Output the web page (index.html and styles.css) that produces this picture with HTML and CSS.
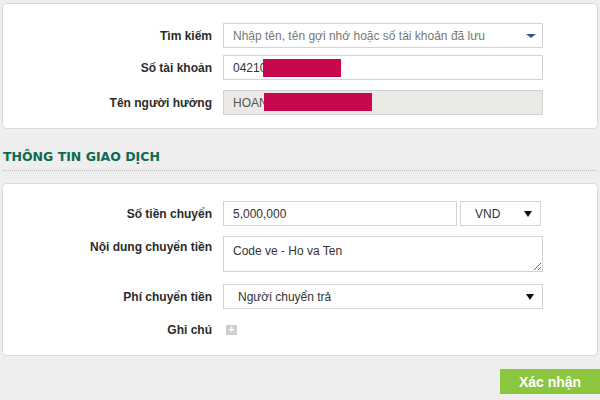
FILE: index.html
```html
<!DOCTYPE html>
<html lang="vi">
<head>
    <meta charset="UTF-8">
    <meta name="viewport" content="width=device-width, initial-scale=1.0">
    <title>Chuyển khoản</title>
    <link rel="stylesheet" href="styles.css">
</head>
<body>

    <div class="transfer-page">
        <!-- Thông tin người hưởng -->
        <div class="panel panel-receiver">
            <div class="form-row">
                <label class="form-label">Tìm kiếm</label>
                <div class="field select-field">
                    <select class="form-control search-select">
                        <option>Nhập tên, tên gợi nhớ hoặc số tài khoản đã lưu</option>
                    </select>
                    <span class="caret caret-blue"></span>
                </div>
            </div>
            <div class="form-row">
                <label class="form-label">Số tài khoản</label>
                <div class="field">
                    <input type="text" class="form-control" value="04210">
                    <span class="mask mask-account"></span>
                </div>
            </div>
            <div class="form-row">
                <label class="form-label">Tên người hưởng</label>
                <div class="field">
                    <input type="text" class="form-control readonly" value="HOAN" readonly>
                    <span class="mask mask-name"></span>
                </div>
            </div>
        </div>

        <h2 class="section-title">THÔNG TIN GIAO DỊCH</h2>

        <!-- Thông tin giao dịch -->
        <div class="panel panel-transaction">
            <div class="form-row">
                <label class="form-label">Số tiền chuyển</label>
                <div class="field amount-field">
                    <input type="text" class="form-control amount" value="5,000,000">
                    <div class="select-field currency">
                        <select class="form-control">
                            <option>VND</option>
                        </select>
                        <span class="caret"></span>
                    </div>
                </div>
            </div>
            <div class="form-row row-top">
                <label class="form-label">Nội dung chuyển tiền</label>
                <div class="field">
                    <textarea class="form-control note">Code ve - Ho va Ten</textarea>
                </div>
            </div>
            <div class="form-row">
                <label class="form-label">Phí chuyển tiền</label>
                <div class="field select-field">
                    <select class="form-control fee-select">
                        <option>Người chuyển trả</option>
                    </select>
                    <span class="caret"></span>
                </div>
            </div>
            <div class="form-row row-note">
                <label class="form-label">Ghi chú</label>
                <div class="field">
                    <span class="add-note">+</span>
                </div>
            </div>
        </div>

        <div class="actions">
            <button type="button" class="btn-confirm">Xác nhận</button>
        </div>
    </div>

</body>
</html>
```

FILE: styles.css
```css
body {
    margin: 0;
    background-color: #eeeeee;
    font-family: "Liberation Sans", Arial, sans-serif;
    font-size: 12px;
    color: #333333;
}

.transfer-page {
    padding-top: 3px;
}

.panel {
    background-color: #ffffff;
    border: 1px solid #dadada;
    border-radius: 5px;
    margin: 0 2px;
}

.panel-receiver {
    padding: 19px 0 13px;
}

.panel-transaction {
    padding: 17px 0 15px;
}

.form-row {
    display: flex;
    align-items: center;
}

/* khoảng cách giữa các dòng */
.panel-receiver .form-row:nth-child(1) { margin-bottom: 7px; }
.panel-receiver .form-row:nth-child(2) { margin-bottom: 10px; }
.panel-transaction .form-row:nth-child(1) { margin-bottom: 10px; }
.panel-transaction .form-row:nth-child(2) { margin-bottom: 12px; }
.panel-transaction .form-row:nth-child(3) { margin-bottom: 11px; }

.form-row.row-top {
    align-items: flex-start;
}

.form-label {
    width: 209px;
    margin-right: 11px;
    text-align: right;
    font-family: "Liberation Sans", Arial, sans-serif;
    font-weight: bold;
    font-size: 12px;
    color: #2b2b2b;
}

.row-top .form-label {
    padding-top: 4px;
}

.field {
    position: relative;
    width: 320px;
    display: flex;
    align-items: center;
}

.form-control {
    box-sizing: border-box;
    width: 100%;
    height: 25px;
    margin: 0;
    padding: 0 9px;
    border: 1px solid #d3d3d3;
    border-radius: 0;
    background-color: #ffffff;
    font-family: "Liberation Sans", Arial, sans-serif;
    font-size: 12px;
    color: #333333;
    outline: none;
}

.form-control.readonly {
    background-color: #eae9e4;
    color: #555555;
}

select.form-control {
    -webkit-appearance: none;
    appearance: none;
}

.search-select {
    color: #777777;
}

.fee-select {
    padding-left: 14px;
}

.select-field {
    position: relative;
}

/* mũi tên của select */
.caret {
    position: absolute;
    right: 9px;
    top: 10px;
    width: 0;
    height: 0;
    border-left: 4px solid transparent;
    border-right: 4px solid transparent;
    border-top: 6px solid #111111;
    pointer-events: none;
}

.caret-blue {
    top: 11px;
    right: 7px;
    border-left-width: 5px;
    border-right-width: 5px;
    border-top: 4px solid #2d5c94;
}

/* che thông tin tài khoản */
.mask {
    position: absolute;
    top: 4px;
    height: 18px;
    background-color: #c8084e;
}

.mask-account {
    left: 40px;
    width: 78px;
}

.mask-name {
    left: 41px;
    top: 3px;
    width: 108px;
}

.amount-field {
    gap: 3px;
}

.amount {
    width: 234px;
}

.currency {
    width: 81px;
}

.currency select {
    padding-left: 14px;
}

.currency .caret {
    right: 9px;
}

.note {
    height: 36px;
    padding: 7px 9px;
    resize: vertical;
    line-height: 15px;
}

.row-note {
    height: 20px;
}

.add-note {
    display: inline-block;
    width: 11px;
    height: 10px;
    margin-left: 3px;
    background-color: #cfcfcf;
    color: #ffffff;
    font-size: 10px;
    line-height: 10px;
    text-align: center;
    font-weight: bold;
}

.section-title {
    margin: 20px 3px 12px;
    padding-bottom: 6px;
    border-bottom: 1px dotted #bdbdbd;
    font-family: "DejaVu Sans", Verdana, sans-serif;
    font-size: 12.5px;
    font-weight: bold;
    color: #0f6b4f;
}

.actions {
    display: flex;
    justify-content: flex-end;
    margin-top: 13px;
}

.btn-confirm {
    width: 100px;
    height: 25px;
    border: none;
    background-color: #8cc63f;
    color: #ffffff;
    font-family: "Liberation Sans", Arial, sans-serif;
    font-weight: bold;
    font-size: 14px;
    padding: 0;
}
```
